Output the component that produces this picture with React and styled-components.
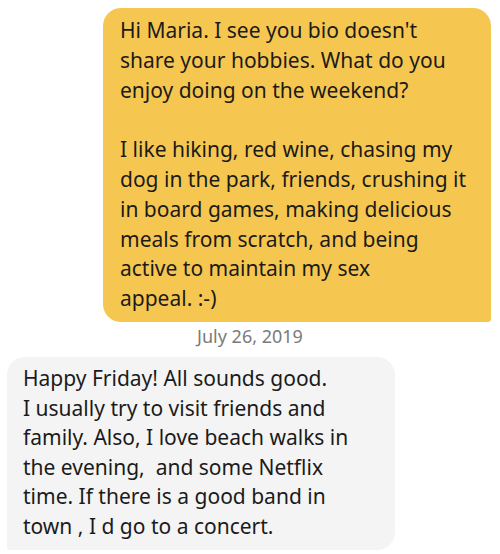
import React from 'react';
import styled, { createGlobalStyle } from 'styled-components';

const Global = createGlobalStyle`
  body {
    margin: 0;
    background: #fff;
    font-family: 'Noto Sans', 'Open Sans', sans-serif;
  }
`;

const Thread = styled.div`
  display: flex;
  flex-direction: column;
  padding: 8px 9px 0 7px;
`;

const Bubble = styled.div`
  width: 388px;
  box-sizing: border-box;
  font-size: 21px;
  color: #1b1b1b;
  align-self: ${(p) => (p.$mine ? 'flex-end' : 'flex-start')};
  background: ${(p) => (p.$mine ? '#f6c750' : '#f4f4f4')};
  border-radius: ${(p) => (p.$mine ? '18px 18px 3px 18px' : '18px 18px 18px 3px')};
  line-height: ${(p) => (p.$mine ? '29.8px' : '29.6px')};
  padding: ${(p) => (p.$mine ? '8px 17px 8px' : '7px 16px 8px')};
`;

const Stamp = styled.div`
  text-align: center;
  font-size: 18px;
  line-height: 22px;
  color: #7a7a7a;
  margin: 3px 0 10px;
  padding-left: 2px;
`;

const Line = styled.div`
  white-space: pre;
  min-height: 1lh;
`;

const sent = [
  'Hi Maria. I see you bio doesn\'t',
  'share your hobbies. What do you',
  'enjoy doing on the weekend?',
  '',
  'I like hiking, red wine, chasing my',
  'dog in the park, friends, crushing it',
  'in board games, making delicious',
  'meals from scratch, and being',
  'active to maintain my sex',
  'appeal. :-)',
];

const received = [
  'Happy Friday! All sounds good.',
  'I usually try to visit friends and',
  'family. Also, I love beach walks in',
  'the evening,\u00a0 and some Netflix',
  'time. If there is a good band in',
  'town , I d go to a concert.',
];

export default function App() {
  return (
    <>
      <Global />
      <Thread>
        <Bubble $mine>
          {sent.map((l, i) => (
            <Line key={i}>{l}</Line>
          ))}
        </Bubble>
        <Stamp>July 26, 2019</Stamp>
        <Bubble>
          {received.map((l, i) => (
            <Line key={i}>{l}</Line>
          ))}
        </Bubble>
      </Thread>
    </>
  );
}
